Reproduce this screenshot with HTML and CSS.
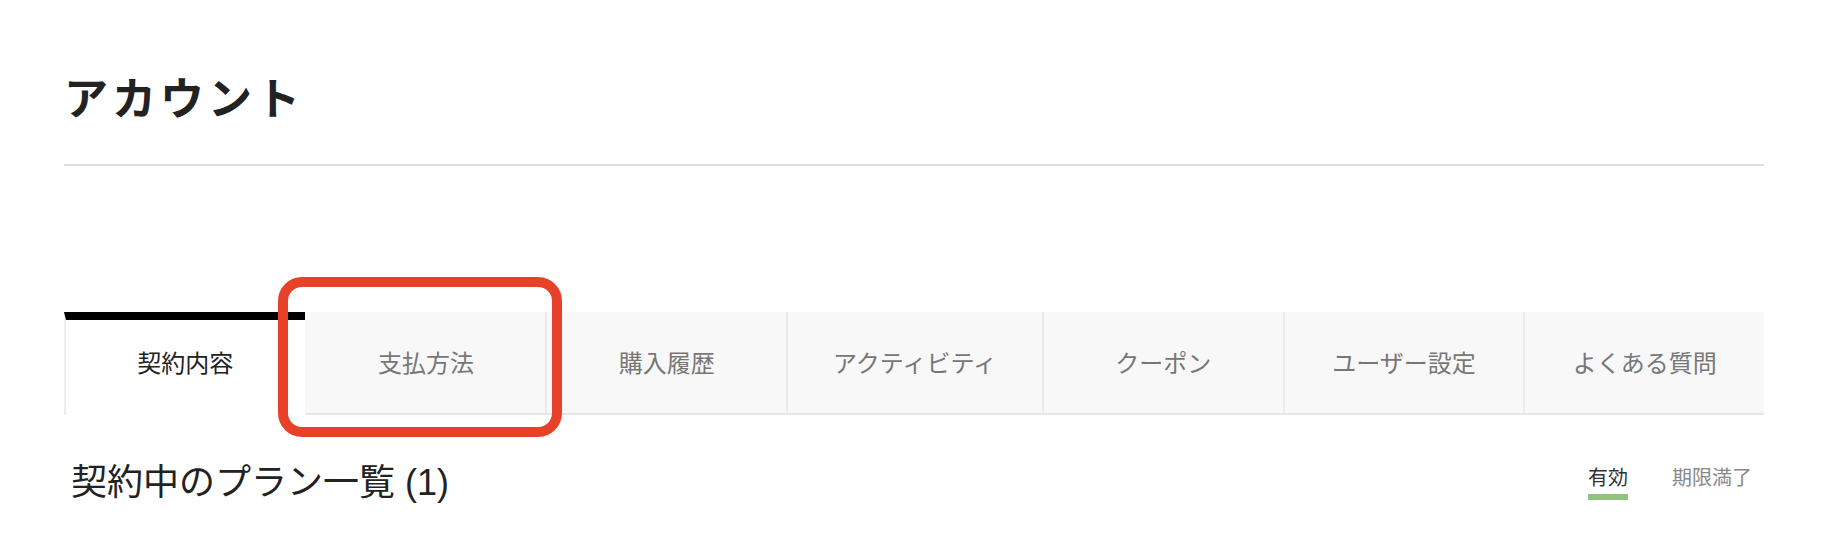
FILE: index.html
```html
<!DOCTYPE html>
<html lang="ja">
<head>
    <meta charset="UTF-8">
    <title>アカウント</title>
    <link rel="stylesheet" href="styles.css">
</head>
<body>

    <div class="page">
        <div class="header">
            <h1>アカウント</h1>
        </div>

        <div class="tabs-wrap">
            <ul class="tabs">
                <li class="tab active">契約内容</li>
                <li class="tab">支払方法</li>
                <li class="tab">購入履歴</li>
                <li class="tab">アクティビティ</li>
                <li class="tab">クーポン</li>
                <li class="tab">ユーザー設定</li>
                <li class="tab">よくある質問</li>
            </ul>
            <div class="highlight"></div>
        </div>

        <div class="plan-head">
            <h2>契約中のプラン一覧 (1)</h2>
            <div class="filter">
                <span class="filter-item current">有効</span>
                <span class="filter-item">期限満了</span>
            </div>
        </div>
    </div>

</body>
</html>
```

FILE: styles.css
```css
body {
    font-family: "Liberation Sans", "Noto Sans CJK JP", sans-serif;
    background-color: #fff;
    color: #222;
    margin: 0;
}
.page {
    padding: 0 68px 0 64px;
}
.header {
    padding-top: 67px;
    padding-bottom: 31px;
    border-bottom: 2px solid #dedede;
}
h1 {
    margin: 0;
    font-size: 44px;
    line-height: 66px;
    font-weight: 700;
    letter-spacing: 4px;
    color: #222;
}
.tabs-wrap {
    position: relative;
    margin-top: 146px;
}
.tabs {
    display: flex;
    list-style: none;
    margin: 0;
    padding: 0;
}
.tab {
    flex: 1;
    white-space: nowrap;
    box-sizing: border-box;
    height: 103px;
    padding: 0 45px 3px;
    display: flex;
    align-items: center;
    justify-content: center;
    font-size: 24px;
    color: #777;
    background-color: #f8f8f8;
    border-left: 2px solid #ebebeb;
    border-bottom: 2px solid #e6e6e6;
}
.tab.active {
    color: #222;
    background-color: #fff;
    padding-bottom: 13px;
    border-top: 8px solid #000;
    border-left-color: #eee;
    border-bottom: none;
}
.tab.active + .tab {
    border-left-color: transparent;
}
.highlight {
    position: absolute;
    left: 214px;
    top: -35px;
    width: 284px;
    height: 160px;
    box-sizing: border-box;
    border: 10px solid #e8412a;
    border-radius: 24px;
}
.plan-head {
    display: flex;
    justify-content: space-between;
    align-items: flex-start;
    margin-top: 43px;
    padding: 0 12px 0 7px;
}
h2 {
    margin: 0;
    font-size: 36px;
    line-height: 50px;
    font-weight: 400;
    color: #222;
}
.filter {
    display: flex;
    gap: 44px;
    margin-top: 8px;
}
.filter-item {
    font-size: 20px;
    line-height: 24px;
    color: #888;
    padding-bottom: 4px;
    border-bottom: 6px solid transparent;
}
.filter-item.current {
    color: #333;
    border-bottom-color: #90c47c;
}
```
